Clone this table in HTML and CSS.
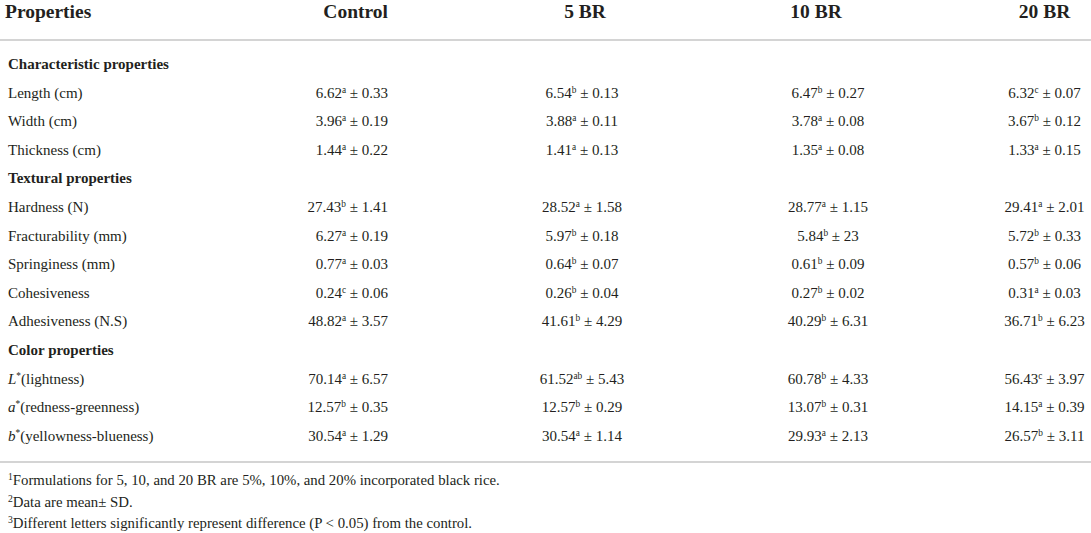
FILE: index.html
```html
<!DOCTYPE html>
<html lang="en">
<head>
    <meta charset="UTF-8">
    <meta name="viewport" content="width=device-width, initial-scale=1.0">
    <title>Properties of black rice formulations</title>
    <link rel="stylesheet" href="styles.css">
</head>
<body>

    <table class="props">
        <colgroup>
            <col class="w-name">
            <col class="w-ctrl">
            <col class="w-br5">
            <col class="w-br10">
            <col class="w-br20">
        </colgroup>
        <thead>
            <tr>
                <th class="c-name">Properties</th>
                <th class="c-ctrl">Control</th>
                <th class="c-br5">5 BR</th>
                <th class="c-br10">10 BR</th>
                <th class="c-br20">20 BR</th>
            </tr>
        </thead>
        <tbody>
            <tr class="group first">
                <td class="c-name" colspan="5">Characteristic properties</td>
            </tr>
            <tr>
                <td class="c-name">Length (cm)</td>
                <td class="c-ctrl">6.62<sup>a</sup> ± 0.33</td>
                <td class="c-br5">6.54<sup>b</sup> ± 0.13</td>
                <td class="c-br10">6.47<sup>b</sup> ± 0.27</td>
                <td class="c-br20">6.32<sup>c</sup> ± 0.07</td>
            </tr>
            <tr>
                <td class="c-name">Width (cm)</td>
                <td class="c-ctrl">3.96<sup>a</sup> ± 0.19</td>
                <td class="c-br5">3.88<sup>a</sup> ± 0.11</td>
                <td class="c-br10">3.78<sup>a</sup> ± 0.08</td>
                <td class="c-br20">3.67<sup>b</sup> ± 0.12</td>
            </tr>
            <tr>
                <td class="c-name">Thickness (cm)</td>
                <td class="c-ctrl">1.44<sup>a</sup> ± 0.22</td>
                <td class="c-br5">1.41<sup>a</sup> ± 0.13</td>
                <td class="c-br10">1.35<sup>a</sup> ± 0.08</td>
                <td class="c-br20">1.33<sup>a</sup> ± 0.15</td>
            </tr>
            <tr class="group">
                <td class="c-name" colspan="5">Textural properties</td>
            </tr>
            <tr>
                <td class="c-name">Hardness (N)</td>
                <td class="c-ctrl">27.43<sup>b</sup> ± 1.41</td>
                <td class="c-br5">28.52<sup>a</sup> ± 1.58</td>
                <td class="c-br10">28.77<sup>a</sup> ± 1.15</td>
                <td class="c-br20">29.41<sup>a</sup> ± 2.01</td>
            </tr>
            <tr>
                <td class="c-name">Fracturability (mm)</td>
                <td class="c-ctrl">6.27<sup>a</sup> ± 0.19</td>
                <td class="c-br5">5.97<sup>b</sup> ± 0.18</td>
                <td class="c-br10">5.84<sup>b</sup> ± 23</td>
                <td class="c-br20">5.72<sup>b</sup> ± 0.33</td>
            </tr>
            <tr>
                <td class="c-name">Springiness (mm)</td>
                <td class="c-ctrl">0.77<sup>a</sup> ± 0.03</td>
                <td class="c-br5">0.64<sup>b</sup> ± 0.07</td>
                <td class="c-br10">0.61<sup>b</sup> ± 0.09</td>
                <td class="c-br20">0.57<sup>b</sup> ± 0.06</td>
            </tr>
            <tr>
                <td class="c-name">Cohesiveness</td>
                <td class="c-ctrl">0.24<sup>c</sup> ± 0.06</td>
                <td class="c-br5">0.26<sup>b</sup> ± 0.04</td>
                <td class="c-br10">0.27<sup>b</sup> ± 0.02</td>
                <td class="c-br20">0.31<sup>a</sup> ± 0.03</td>
            </tr>
            <tr>
                <td class="c-name">Adhesiveness (N.S)</td>
                <td class="c-ctrl">48.82<sup>a</sup> ± 3.57</td>
                <td class="c-br5">41.61<sup>b</sup> ± 4.29</td>
                <td class="c-br10">40.29<sup>b</sup> ± 6.31</td>
                <td class="c-br20">36.71<sup>b</sup> ± 6.23</td>
            </tr>
            <tr class="group">
                <td class="c-name" colspan="5">Color properties</td>
            </tr>
            <tr>
                <td class="c-name"><i>L</i><sup>*</sup>(lightness)</td>
                <td class="c-ctrl">70.14<sup>a</sup> ± 6.57</td>
                <td class="c-br5">61.52<sup>ab</sup> ± 5.43</td>
                <td class="c-br10">60.78<sup>b</sup> ± 4.33</td>
                <td class="c-br20">56.43<sup>c</sup> ± 3.97</td>
            </tr>
            <tr>
                <td class="c-name"><i>a</i><sup>*</sup>(redness-greenness)</td>
                <td class="c-ctrl">12.57<sup>b</sup> ± 0.35</td>
                <td class="c-br5">12.57<sup>b</sup> ± 0.29</td>
                <td class="c-br10">13.07<sup>b</sup> ± 0.31</td>
                <td class="c-br20">14.15<sup>a</sup> ± 0.39</td>
            </tr>
            <tr class="last">
                <td class="c-name"><i>b</i><sup>*</sup>(yellowness-blueness)</td>
                <td class="c-ctrl">30.54<sup>a</sup> ± 1.29</td>
                <td class="c-br5">30.54<sup>a</sup> ± 1.14</td>
                <td class="c-br10">29.93<sup>a</sup> ± 2.13</td>
                <td class="c-br20">26.57<sup>b</sup> ± 3.11</td>
            </tr>
        </tbody>
    </table>

    <div class="notes">
        <p><sup>1</sup>Formulations for 5, 10, and 20 BR are 5%, 10%, and 20% incorporated black rice.</p>
        <p><sup>2</sup>Data are mean± SD.</p>
        <p><sup>3</sup>Different letters significantly represent difference (P &lt; 0.05) from the control.</p>
    </div>

</body>
</html>
```

FILE: styles.css
```css
body {
    margin: 0;
    font-family: "Liberation Serif", "Times New Roman", serif;
    color: #231f20;
    background: #fff;
}
.props {
    width: 1091px;
    border-collapse: collapse;
    table-layout: fixed;
    font-size: 15px;
    border-bottom: 2px solid #d4d4d4;
}
.w-name { width: 300px; }
.w-ctrl { width: 96px; }
.w-br5 { width: 372px; }
.w-br10 { width: 120px; }
.w-br20 { width: 203px; }

th, td {
    padding: 0;
    white-space: nowrap;
}
thead th {
    font-size: 19.5px;
    font-weight: bold;
    line-height: 24px;
    padding-bottom: 15px;
    border-bottom: 2px solid #d4d4d4;
}
td {
    line-height: 28.6px;
}
.c-name {
    text-align: left;
    padding-left: 8px;
}
thead .c-name {
    padding-left: 5px;
}
.c-ctrl {
    text-align: right;
    padding-right: 8px;
}
.c-br5 {
    text-align: center;
}
.c-br10 {
    text-align: center;
}
.c-br20 {
    text-align: center;
    padding-left: 110px;
}
thead .c-br5 { padding-left: 6px; }
thead .c-br10 { padding-right: 24px; }

.group td {
    font-weight: bold;
}
tr.first td {
    padding-top: 9px;
}
tr.last td {
    padding-bottom: 11px;
}
sup {
    font-size: 0.62em;
    line-height: 0;
    vertical-align: 0.55em;
}
.notes {
    padding: 7px 0 0 8px;
    font-size: 14.8px;
}
.notes p {
    margin: 0;
    line-height: 21.5px;
}
.notes sup {
    font-size: 0.65em;
    vertical-align: 0.5em;
}
```
